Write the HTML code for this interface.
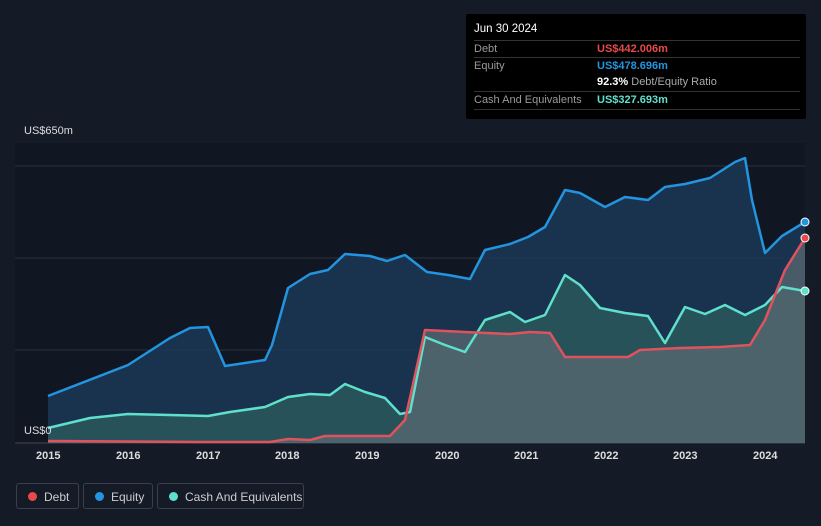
<!DOCTYPE html>
<html><head><style>
body{margin:0;width:821px;height:526px;background:#151b26;font-family:"Liberation Sans",sans-serif;overflow:hidden;position:relative}
.tt{position:absolute;left:466px;top:14px;width:340px;height:105px;background:#000;border-radius:2px;font-size:11px}
.tt .row{position:absolute;left:8px;right:6px;height:17px;border-top:1px solid #333;line-height:17px;color:#9a9a9a}
.tt .v{position:absolute;left:123px;font-weight:bold}
.leg{position:absolute;top:483px;height:26px;border:1px solid #3a404b;border-radius:3px;color:#ccc;font-size:12px;line-height:26px;box-sizing:border-box}
.leg i{position:absolute;left:11px;top:8px;width:9px;height:9px;border-radius:50%}
.leg span{position:absolute;left:27px}
.ax{position:absolute;top:450px;color:#ddd;font-size:11px;font-weight:bold}
</style></head><body>
<svg width="821" height="526" style="position:absolute;left:0;top:0">
<rect x="15" y="143" width="790" height="300" fill="#111722"/>
<g stroke="#2a303a" stroke-width="1"><line x1="15" y1="166" x2="805" y2="166"/><line x1="15" y1="258" x2="805" y2="258"/><line x1="15" y1="350" x2="805" y2="350"/></g>
<line x1="15" y1="443" x2="805" y2="443" stroke="#444a54"/>
<path d="M48,396 L128,365 L170,338 L190,328 L208,327 L225,366 L265,360 L272,345 L288,288 L310,274 L328,270 L345,254 L370,256 L387,261 L405,255 L427,272 L448,275 L470,279 L485,250 L510,244 L528,237 L545,227 L565,190 L580,193 L605,207 L625,197 L648,200 L665,187 L685,184 L710,178 L735,162 L745,158 L752,200 L765,253 L782,236 L805,222 L805,443 L48,443Z" fill="#1b3a5a" fill-opacity="0.8"/>
<path d="M48,428 L90,418 L128,414 L170,415 L208,416 L230,412 L265,407 L288,397 L310,394 L330,395 L345,384 L365,392 L385,398 L400,414 L410,412 L425,337 L445,345 L465,352 L485,320 L510,312 L525,322 L545,315 L565,275 L580,285 L600,308 L625,313 L648,316 L665,343 L685,307 L705,314 L725,305 L745,315 L765,305 L782,287 L805,291 L805,443 L48,443Z" fill="#2c5a5c" fill-opacity="0.8"/>
<path d="M48,441 L200,442 L270,442 L288,439 L310,440 L325,436 L390,436 L405,420 L425,330 L465,332 L510,334 L530,332 L550,333 L565,357 L600,357 L628,357 L640,350 L680,348 L720,347 L750,345 L765,320 L785,270 L805,238 L805,443 L48,443Z" fill="#5a6a72" fill-opacity="0.75"/>
<path d="M48,396 L128,365 L170,338 L190,328 L208,327 L225,366 L265,360 L272,345 L288,288 L310,274 L328,270 L345,254 L370,256 L387,261 L405,255 L427,272 L448,275 L470,279 L485,250 L510,244 L528,237 L545,227 L565,190 L580,193 L605,207 L625,197 L648,200 L665,187 L685,184 L710,178 L735,162 L745,158 L752,200 L765,253 L782,236 L805,222" fill="none" stroke="#2394df" stroke-width="2.5" stroke-linejoin="round"/>
<path d="M48,428 L90,418 L128,414 L170,415 L208,416 L230,412 L265,407 L288,397 L310,394 L330,395 L345,384 L365,392 L385,398 L400,414 L410,412 L425,337 L445,345 L465,352 L485,320 L510,312 L525,322 L545,315 L565,275 L580,285 L600,308 L625,313 L648,316 L665,343 L685,307 L705,314 L725,305 L745,315 L765,305 L782,287 L805,291" fill="none" stroke="#5ee0cc" stroke-width="2.5" stroke-linejoin="round"/>
<path d="M48,441 L200,442 L270,442 L288,439 L310,440 L325,436 L390,436 L405,420 L425,330 L465,332 L510,334 L530,332 L550,333 L565,357 L600,357 L628,357 L640,350 L680,348 L720,347 L750,345 L765,320 L785,270 L805,238" fill="none" stroke="#e0525d" stroke-width="2.5" stroke-linejoin="round"/>
<circle cx="805" cy="222" r="4" fill="#2394df" stroke="#fff" stroke-width="1"/>
<circle cx="805" cy="238" r="4" fill="#e84a4a" stroke="#fff" stroke-width="1"/>
<circle cx="805" cy="291" r="4" fill="#5ee0cc" stroke="#fff" stroke-width="1"/>
</svg>
<div style="position:absolute;left:24px;top:125px;color:#ddd;font-size:11px">US$650m</div>
<div style="position:absolute;left:24px;top:425px;color:#ddd;font-size:11px">US$0</div>
<div class="ax" style="left:36px">2015</div><div class="ax" style="left:116px">2016</div><div class="ax" style="left:196px">2017</div><div class="ax" style="left:275px">2018</div><div class="ax" style="left:355px">2019</div><div class="ax" style="left:435px">2020</div><div class="ax" style="left:514px">2021</div><div class="ax" style="left:594px">2022</div><div class="ax" style="left:673px">2023</div><div class="ax" style="left:753px">2024</div>
<div class="tt">
<div style="position:absolute;left:8px;top:9px;color:#fff;font-size:11.5px">Jun 30 2024</div>
<div class="row" style="top:26px">Debt<span class="v" style="color:#e84a4a">US$442.006m</span></div>
<div class="row" style="top:43px">Equity<span class="v" style="color:#2394df">US$478.696m</span></div>
<div class="row" style="top:60px;border-top:none"><span class="v" style="color:#fff">92.3% <span style="color:#aaa;font-weight:normal">Debt/Equity Ratio</span></span></div>
<div class="row" style="top:77px">Cash And Equivalents<span class="v" style="color:#5ee0cc">US$327.693m</span></div>
<div class="row" style="top:95px;height:0"></div>
</div>
<div class="leg" style="left:16px;width:63px"><i style="background:#e84a4a"></i><span>Debt</span></div>
<div class="leg" style="left:83px;width:70px"><i style="background:#2394df"></i><span>Equity</span></div>
<div class="leg" style="left:157px;width:147px"><i style="background:#5ee0cc"></i><span>Cash And Equivalents</span></div>
</body></html>
